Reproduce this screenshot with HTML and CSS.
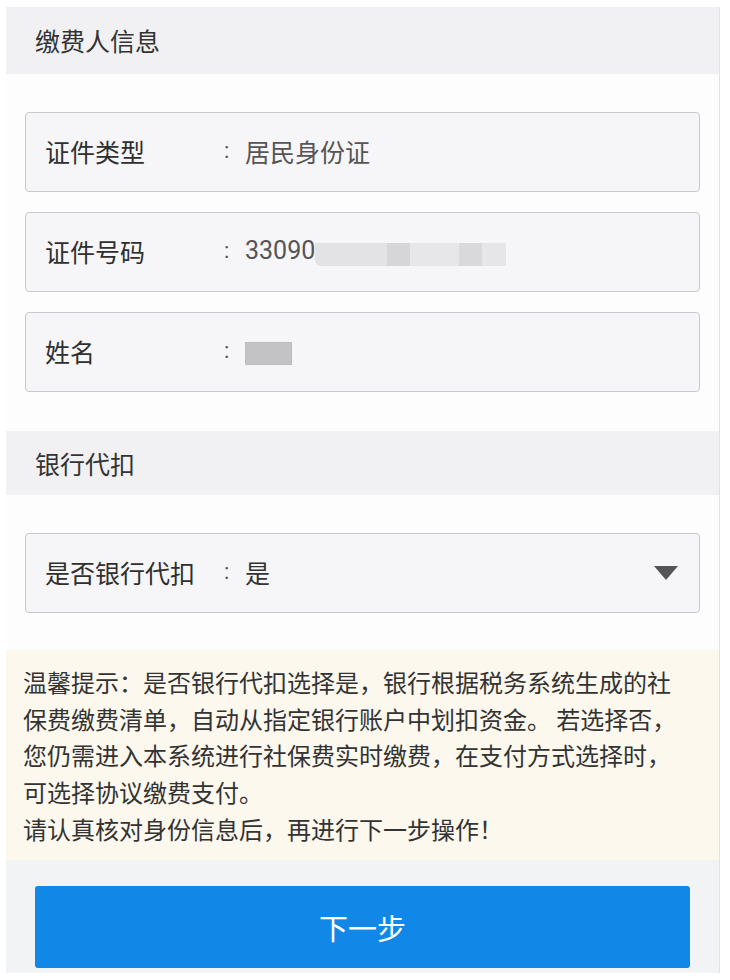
FILE: index.html
```html
<!DOCTYPE html>
<html lang="zh-CN">
<head>
<meta charset="utf-8">
<title>缴费人信息</title>
<link rel="stylesheet" href="styles.css">
</head>
<body>
<div class="page">
  <div class="sec-head sec-head-1">缴费人信息</div>
  <div class="fields">
    <div class="field">
      <span class="label">证件类型</span>
      <span class="colon">:</span>
      <span class="value">居民身份证</span>
    </div>
    <div class="field">
      <span class="label">证件号码</span>
      <span class="colon">:</span>
      <span class="value num">33090</span>
      <span class="mosaic">
        <span class="cell c1"></span><span class="cell c2"></span><span class="cell c3"></span><span class="cell c4"></span><span class="cell c5"></span>
      </span>
    </div>
    <div class="field">
      <span class="label">姓名</span>
      <span class="colon">:</span>
      <span class="name-mosaic"></span>
    </div>
  </div>
  <div class="sec-head sec-head-2">银行代扣</div>
  <div class="fields fields-2">
    <div class="field">
      <span class="label">是否银行代扣</span>
      <span class="colon">:</span>
      <span class="value dark">是</span>
      <span class="arrow"></span>
    </div>
  </div>
  <div class="notice">温馨提示：是否银行代扣选择是，银行根据税务系统生成的社<br>保费缴费清单，自动从指定银行账户中划扣资金。 若选择否，<br>您仍需进入本系统进行社保费实时缴费，在支付方式选择时，<br>可选择协议缴费支付。<br>请认真核对身份信息后，再进行下一步操作！</div>
  <div class="footer">
    <button class="next-btn" type="button">下一步</button>
  </div>
</div>
</body>
</html>
```

FILE: styles.css
```css
html, body {
  margin: 0;
  padding: 0;
  background: #ffffff;
}
body {
  font-family: "Noto Sans CJK SC", "Noto Sans", sans-serif;
  color: #333333;
}
.page {
  margin: 7px 0 0 6px;
  width: 713px;
  border-right: 1px solid #e2e2e4;
  background: #fdfdfe;
}
.sec-head {
  background: #f1f1f3;
  font-size: 25px;
  color: #333;
  padding-left: 29px;
  display: flex;
  align-items: center;
}
.sec-head-1 { height: 67px; padding-bottom: 1px; box-sizing: border-box; }
.sec-head-2 { height: 64px; }
.fields {
  padding: 38px 19px 39px 19px;
  display: flex;
  flex-direction: column;
  gap: 20px;
}
.fields-2 {
  padding: 38px 19px 37px 19px;
}
.field {
  height: 78px;
  border: 1px solid #c9c9cd;
  border-radius: 4px;
  background: #f6f6f8;
  display: flex;
  align-items: center;
  padding: 0 21px 3px 19px;
  box-sizing: content-box;
  height: 75px;
  font-size: 25px;
}
.label {
  width: 180px;
  color: #2f2f2f;
  flex: none;
}
.colon {
  width: 21px;
  flex: none;
  color: #555;
  font-family: Roboto, sans-serif;
  font-size: 22px;
  margin-left: -1px;
}
.value {
  color: #555;
}
.value.dark { color: #333; }
.num {
  font-family: Roboto, "Noto Sans CJK SC", sans-serif;
  font-size: 25px;
}
.mosaic {
  display: flex;
  height: 23px;
  margin-top: 8px;
}
.cell { display: block; height: 23px; }
.c1 { width: 72px; background: #e3e3e5; border-bottom-left-radius: 6px; }
.c2 { width: 23px; background: #d6d6d8; }
.c3 { width: 49px; background: #e7e7e9; }
.c4 { width: 23px; background: #d9d9db; }
.c5 { width: 24px; background: #e6e6e8; }
.name-mosaic {
  display: block;
  width: 47px;
  height: 23px;
  background: #c3c3c5;
  border: 1px solid #bdbdbf;
  box-sizing: border-box;
  margin-top: 5px;
}
.arrow {
  margin-left: auto;
  width: 0;
  height: 0;
  border-left: 12px solid transparent;
  border-right: 12px solid transparent;
  border-top: 14px solid #555558;
  margin-top: 3px;
}
.notice {
  background: #fcf8ee;
  padding: 14px 10px 13px 17px;
  font-size: 24px;
  line-height: 36.7px;
  color: #333;
  white-space: nowrap;
  height: 183px;
}
.footer {
  background: #f2f3f5;
  padding: 26px 29px 5px 29px;
}
.next-btn {
  display: block;
  width: 100%;
  height: 82px;
  border: none;
  border-radius: 3px;
  background: #1188e8;
  color: #ffffff;
  font-family: "Noto Sans CJK SC", sans-serif;
  font-size: 29px;
  padding: 0;
}
```
